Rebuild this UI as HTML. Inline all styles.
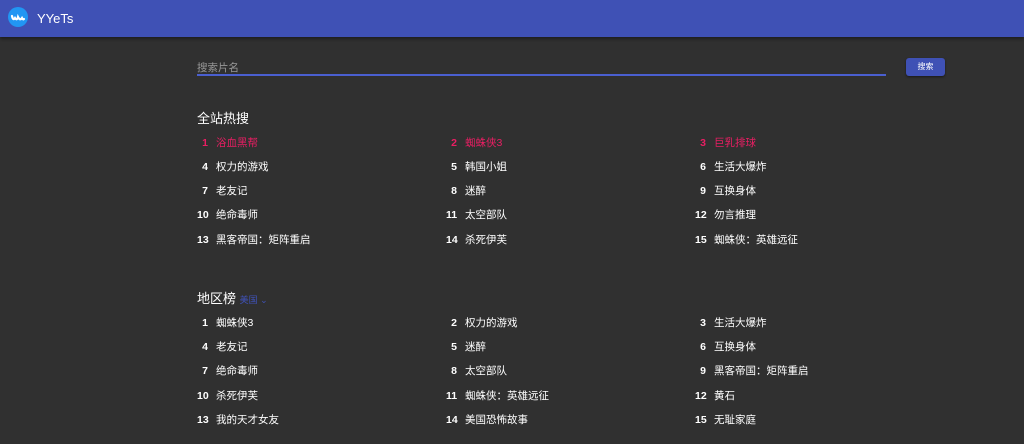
<!DOCTYPE html>
<html><head><meta charset="utf-8"><style>
*{margin:0;padding:0;box-sizing:border-box}
body{width:1024px;height:444px;overflow:hidden;background:#303030;font-family:"Liberation Sans","Noto Sans CJK SC",sans-serif;color:#fff;position:relative}
.hdr{position:absolute;left:0;top:0;width:1024px;height:37px;background:#3f51b5;box-shadow:0 2px 3px rgba(0,0,0,.4)}
.logo{position:absolute;left:8px;top:7px;width:20px;height:20px;border-radius:50%;background:#2196f3}
.title{position:absolute;left:37px;top:11px;font-size:13px}
.inp{position:absolute;left:197px;top:60px;width:689px;height:16px;border-bottom:2px solid #4a5fd0;font-size:10.5px;color:#999}
.btn{position:absolute;left:906px;top:58px;width:39px;height:18px;background:#3f51b5;border-radius:3px;font-size:8px;text-align:center;line-height:18px;box-shadow:0 1px 2px rgba(0,0,0,.5)}
.h{position:absolute;left:197px;font-size:13px}
.row{position:absolute;font-size:10.5px;height:14px;line-height:14px}
.n{display:inline-block;width:11px;text-align:right;font-weight:bold;margin-right:8px}
.r{color:#e91e63}
</style></head><body>
<div class="hdr"><div class="logo"><svg width="20" height="20" viewBox="0 0 20 20"><path d="M4 9 Q5 14 7 11 Q9 14 10 10 Q12 14 14 11 Q15 13 16 12" stroke="#fff" stroke-width="2.2" fill="none" stroke-linecap="round"/></svg></div><div class="title">YYeTs</div></div>
<div class="inp">搜索片名</div>
<div class="btn">搜索</div>
<div class="h" style="top:108px">全站热搜</div>
<div class="h" style="top:288px">地区榜 <span style="font-size:9px;color:#3f51b5">美国 ⌄</span></div>
<script>
function put(list,ys,red){list.forEach((t,i)=>{var d=document.createElement('div');d.className='row'+(red&&i<3?' r':'');d.style.left=[197,446,695][i%3]+'px';d.style.top=(ys[Math.floor(i/3)]-6)+'px';d.innerHTML='<span class="n">'+(i+1)+'</span>'+t;document.body.appendChild(d);});}
put(["浴血黑帮","蜘蛛侠3","巨乳排球","权力的游戏","韩国小姐","生活大爆炸","老友记","迷醉","互换身体","绝命毒师","太空部队","勿言推理","黑客帝国：矩阵重启","杀死伊芙","蜘蛛侠：英雄远征"],[142,166,190,214,239],true);
put(["蜘蛛侠3","权力的游戏","生活大爆炸","老友记","迷醉","互换身体","绝命毒师","太空部队","黑客帝国：矩阵重启","杀死伊芙","蜘蛛侠：英雄远征","黄石","我的天才女友","美国恐怖故事","无耻家庭"],[322,346,370,395,419],false);
</script>
</body></html>
